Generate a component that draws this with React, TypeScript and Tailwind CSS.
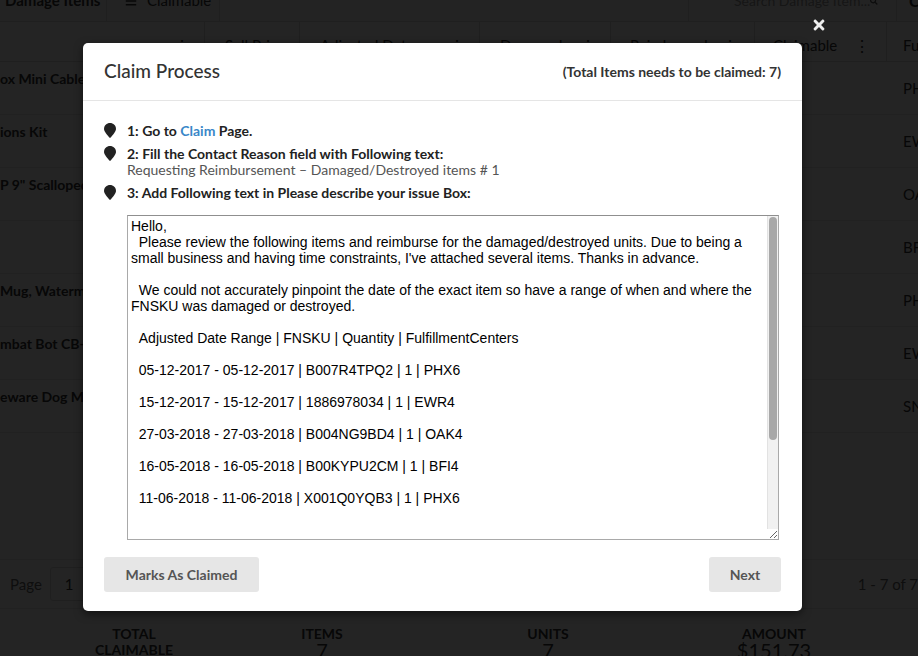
import React from "react";
import { FaTimes, FaSearch, FaBars } from "react-icons/fa";

const rows = [
  { name: "ox Mini Cable Organizer", fc: "PHX6" },
  { name: "ions Kit", fc: "EWR4" },
  { name: 'P 9" Scalloped Edge Plate', fc: "OAK4" },
  { name: "", fc: "BFI4" },
  { name: "Mug, Watermelon Pattern", fc: "PHX6" },
  { name: "mbat Bot CB-1 Robot", fc: "EWR4" },
  { name: "eware Dog Mug Set", fc: "SNA4" },
];

const Dots = () => <span className="text-[#333] text-[16px] leading-none">⋮</span>;

const Marker = () => (
  <svg width="12" height="15" viewBox="0 0 12 15" className="shrink-0 mt-[1px]">
    <path d="M6 0C2.7 0 0 2.6 0 5.9C0 9.3 6 15 6 15C6 15 12 9.3 12 5.9C12 2.6 9.3 0 6 0Z" fill="#222" />
  </svg>
);

const message = `Hello,
  Please review the following items and reimburse for the damaged/destroyed units. Due to being a small business and having time constraints, I've attached several items. Thanks in advance.

  We could not accurately pinpoint the date of the exact item so have a range of when and where the FNSKU was damaged or destroyed.

  Adjusted Date Range | FNSKU | Quantity | FulfillmentCenters

  05-12-2017 - 05-12-2017 | B007R4TPQ2 | 1 | PHX6

  15-12-2017 - 15-12-2017 | 1886978034 | 1 | EWR4

  27-03-2018 - 27-03-2018 | B004NG9BD4 | 1 | OAK4

  16-05-2018 - 16-05-2018 | B00KYPU2CM | 1 | BFI4

  11-06-2018 - 11-06-2018 | X001Q0YQB3 | 1 | PHX6



  02-07-2018 - 02-07-2018 | B01M0GB8CC | 1 | EWR4

  19-08-2018 - 19-08-2018 | B00V4J2X8W | 1 | SNA4

  Thank you.`;

const cols = "grid grid-cols-[205px_95px_180px_131px_144px_132px_1fr]";

export default function App() {
  return (
    <div className="relative w-[918px] h-[656px] overflow-hidden bg-white font-['Lato','Noto_Sans',sans-serif] text-[#333]">
      {/* Background page */}
      <div className="flex flex-col -mt-[20px]">
        {/* top bar */}
        <div className="h-[42px] flex items-center border-b border-[#ddd] bg-[#f7f7f7]">
          <div className="w-[107px] pl-[5px] font-bold text-[15px] whitespace-nowrap border-r border-[#ddd] h-full flex items-center">Damage Items</div>
          <div className="w-[113px] border-r border-[#ddd] h-full flex items-center gap-[10px] pl-[18px] text-[15px] whitespace-nowrap">
            <FaBars className="text-[12px]" />
            Claimable
          </div>
          <div className="flex-1" />
          <div className="w-[209px] h-full border-l border-r border-[#ddd] flex items-center justify-between pl-[45px] pr-[18px] text-[#999] text-[14px] whitespace-nowrap">
            <span>Search Damage Item...</span>
            <FaSearch className="text-[#555] text-[12px]" />
          </div>
          <div className="w-[21px] pl-[12px] font-bold">C</div>
        </div>
        {/* table header */}
        <div className={`h-[40px] ${cols} border-b border-[#ddd] bg-[#fafafa] text-[15px] whitespace-nowrap`}>
          <div className="flex items-center justify-end pt-[8px] pr-[14px] border-r border-[#ddd]"><Dots /></div>
          <div className="flex items-center pt-[8px] pl-[20px] border-r border-[#ddd]">Sell Price</div>
          <div className="flex items-center justify-between pt-[8px] pl-[20px] pr-[14px] border-r border-[#ddd]"><span>Adjusted Date</span><Dots /></div>
          <div className="flex items-center justify-between pt-[8px] pl-[20px] pr-[14px] border-r border-[#ddd]"><span>Damaged</span><Dots /></div>
          <div className="flex items-center justify-between pt-[8px] pl-[19px] pr-[16px] border-r border-[#ddd]"><span>Reimbursed</span><Dots /></div>
          <div className="flex items-center justify-between pt-[8px] pl-[18px] pr-[16px] border-r border-[#ddd]"><span>Claimable</span><Dots /></div>
          <div className="flex items-center pt-[8px] pl-[16px]">Fulfillment</div>
        </div>
        {/* rows */}
        {rows.map((r, i) => (
          <div key={i} className={`h-[53px] ${cols} border-b border-[#e5e5e5] text-[14px]`}>
            <div className="pt-[6px] font-bold whitespace-nowrap overflow-hidden">{r.name}</div>
            <div />
            <div />
            <div />
            <div />
            <div />
            <div className="flex items-center pl-[16px] text-[15px]">{r.fc}</div>
          </div>
        ))}
        <div className="h-[126px]" />
        {/* pagination */}
        <div className="h-[50px] flex items-center justify-between border-t border-b border-[#e5e5e5] text-[15px] text-[#666]">
          <div className="flex items-center gap-[8px] pl-[10px]">
            <span>Page</span>
            <span className="w-[40px] h-[34px] border border-[#ddd] rounded-[3px] flex items-center pl-[14px] text-[#333]">1</span>
          </div>
          <div className="whitespace-nowrap -mr-[40px]">1 - 7 of 7 Items</div>
        </div>
        {/* totals */}
        <div className="grid grid-cols-[268px_108px_344px_108px] pt-[17px] text-center font-bold whitespace-nowrap">
          <div className="text-[14px] leading-[16px]">TOTAL<br />CLAIMABLE</div>
          <div className="text-[14px] leading-[16px]">ITEMS<br /><span className="text-[20px] font-normal">7</span></div>
          <div className="text-[14px] leading-[16px]">UNITS<br /><span className="text-[20px] font-normal">7</span></div>
          <div className="text-[14px] leading-[16px]">AMOUNT<br /><span className="text-[20px] font-normal">$151.73</span></div>
        </div>
      </div>

      {/* Backdrop */}
      <div className="absolute inset-0 bg-black/[0.86]" />

      {/* Close */}
      <div className="absolute left-[811px] top-[17px] text-[#eee]">
        <FaTimes className="w-[16px] h-[16px]" />
      </div>

      {/* Modal */}
      <div className="absolute left-[83px] top-[43px] w-[719px] h-[568px] bg-white rounded-[5px] shadow-[0_3px_9px_rgba(0,0,0,0.5)] flex flex-col">
        <div className="h-[58px] border-b border-[#e5e5e5] flex items-center justify-between px-[21px]">
          <h4 className="text-[19px] font-medium text-[#333]">Claim Process</h4>
          <span className="text-[14px] font-bold text-[#333]">(Total Items needs to be claimed: 7)</span>
        </div>
        <div className="px-[21px] pt-[21px] flex flex-col">
          <ul className="flex flex-col gap-[6px] text-[14px] text-[#222]">
            <li className="flex gap-[11px]">
              <Marker />
              <span className="font-bold leading-[17px]">1: Go to <a className="text-[#3a87c8]">Claim</a> Page.</span>
            </li>
            <li className="flex gap-[11px]">
              <Marker />
              <div className="flex flex-col">
                <span className="font-bold leading-[17px]">2: Fill the Contact Reason field with Following text:</span>
                <span className="leading-[16px] text-[#555]">Requesting Reimbursement – Damaged/Destroyed items # 1</span>
              </div>
            </li>
            <li className="flex gap-[11px]">
              <Marker />
              <span className="font-bold leading-[17px]">3: Add Following text in Please describe your issue Box:</span>
            </li>
          </ul>
          <div className="relative mt-[14px] ml-[23px] w-[652px] h-[325px]">
            <textarea
              readOnly
              defaultValue={message}
              className="block w-full h-full overflow-hidden border border-[#a9a9a9] border-t-[#8f8f8f] pl-[3px] pr-[14px] pt-[2px] pb-[2px] font-['Liberation_Sans',Arial,sans-serif] text-[14px] leading-[16px] text-black outline-none"
            />
            {/* scrollbar */}
            <div className="absolute right-[1px] top-[1px] bottom-[11px] w-[11px] bg-[#f1f1f1] border-l border-[#e2e2e2] flex justify-center pt-[1px]">
              <div className="w-[8px] h-[223px] rounded-full bg-[#a8a8a8]" />
            </div>
          </div>
        </div>
        <div className="flex justify-between px-[21px] pt-[17px]">
          <button className="w-[155px] h-[35px] rounded-[3px] bg-[#e6e6e6] text-[#555] font-bold text-[14px]">Marks As Claimed</button>
          <button className="w-[72px] h-[35px] rounded-[3px] bg-[#e6e6e6] text-[#555] font-bold text-[14px]">Next</button>
        </div>
      </div>
    </div>
  );
}
